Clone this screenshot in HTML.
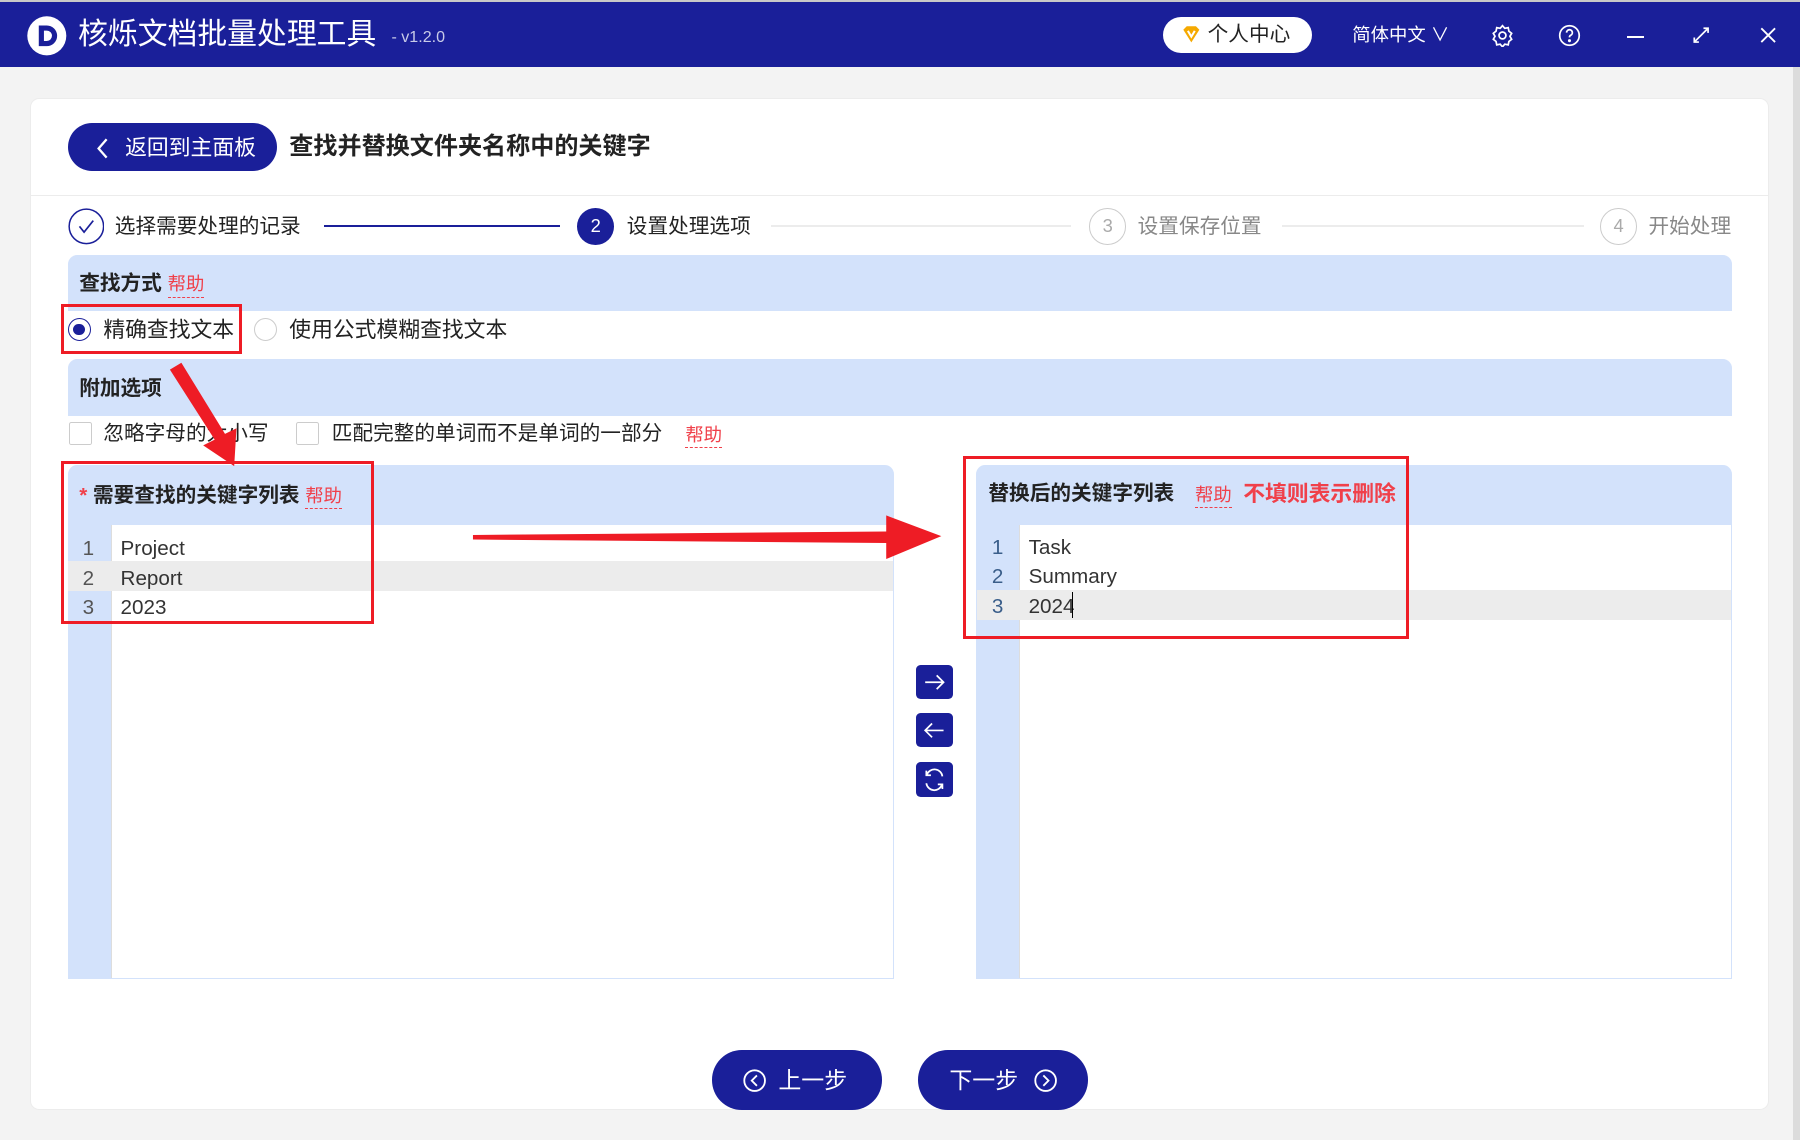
<!DOCTYPE html>
<html><head><meta charset="utf-8"><style>
*{margin:0;padding:0;box-sizing:border-box}
html,body{width:1800px;height:1140px;overflow:hidden;background:#f3f3f3}
#w{position:relative;width:1568px;height:993px;zoom:1.14796;font-family:"Liberation Sans","Noto Sans CJK SC",sans-serif;color:#222}
.a{position:absolute}
.hd{left:0;top:0;width:1568px;height:58px;background:#1a1f99;border-top:2px solid #c8c8c8}
.t{white-space:nowrap;line-height:1}
.card{left:26px;top:85px;width:1515px;height:882px;background:#fff;border-radius:8px;border:1px solid #ececec}
.sec{background:#d3e2fb;border-radius:8px 8px 0 0}
.help{color:#f0404a;border-bottom:1px dashed #f0404a;font-size:16px;padding-bottom:2px;font-weight:normal}
.rb{border:3px solid #ee1c25}
.sb{background:#1a1f99;border-radius:4px;width:32px;height:30px}
.ln{font-size:18px}
</style></head><body><div id="w">
<div class="a hd"></div>
<svg class="a" style="left:22px;top:12px" width="38" height="38" viewBox="0 0 38 38"><circle cx="19" cy="19" r="17" fill="#fff"/><path d="M12 10h7a9 9 0 0 1 0 18h-7z" fill="#1a1f99"/><path d="M16.5 14.5h2.5a4.5 4.5 0 0 1 0 9h-2.5z" fill="#fff"/></svg>
<div class="a t" style="left:68px;top:17px;font-size:26px;color:#fff">核烁文档批量处理工具</div>
<div class="a t" style="left:341px;top:25px;font-size:14px;color:#c8cbe8">- v1.2.0</div>
<div class="a" style="left:1013px;top:15px;width:130px;height:31px;background:#fff;border-radius:16px"></div>
<svg class="a" style="left:1029px;top:21px" width="18" height="18" viewBox="0 0 18 18"><path d="M2 5l3-3h8l3 3-7 11z" fill="#f5a900"/><path d="M6 6l3 5 3-5" stroke="#fff" stroke-width="1.8" fill="none"/></svg>
<div class="a t" style="left:1052px;top:22px;font-size:18px;color:#222">个人中心</div>
<div class="a t" style="left:1178px;top:23px;font-size:16px;color:#fff">简体中文 ∨</div>
<svg class="a" style="left:1299px;top:21px" width="20" height="20" viewBox="0 0 20 20" fill="none" stroke="#fff" stroke-width="1.5"><circle cx="10" cy="10" r="3"/><path d="M10 1.5l2 2.3 3-.6.6 3 2.4 1.9-1.5 2.6 1.5 2.6-2.4 1.9-.6 3-3-.6-2 2.3-2-2.3-3 .6-.6-3L2 13.3l1.5-2.6L2 8.1l2.4-1.9.6-3 3 .6z"/></svg>
<svg class="a" style="left:1357px;top:21px" width="20" height="20" viewBox="0 0 20 20" fill="none" stroke="#fff" stroke-width="1.5"><circle cx="10" cy="10" r="8.5"/><path d="M7.5 7.5a2.5 2.5 0 1 1 3.5 2.3c-.8.4-1 1-1 1.8"/><circle cx="10" cy="14.5" r=".6" fill="#fff"/></svg>
<div class="a" style="left:1417px;top:31px;width:15px;height:2px;background:#fff"></div>
<svg class="a" style="left:1474px;top:23px" width="16" height="16" viewBox="0 0 16 16" stroke="#fff" stroke-width="1.5" fill="none"><path d="M2 14L14 2M10 2h4v4M2 10v4h4"/></svg>
<svg class="a" style="left:1532px;top:23px" width="16" height="16" viewBox="0 0 16 16" stroke="#fff" stroke-width="1.6"><path d="M2 2l12 12M14 2L2 14"/></svg>
<div class="a" style="left:1562px;top:58px;width:6px;height:935px;background:#dcdcdc"></div>

<div class="a card"></div>
<div class="a" style="left:59px;top:107px;width:182px;height:42px;background:#1a1f99;border-radius:21px"></div>
<svg class="a" style="left:82px;top:119px" width="14" height="20" fill="none" stroke="#fff" stroke-width="2"><path d="M11 2L4 10l7 8"/></svg>
<div class="a t" style="left:109px;top:119px;font-size:19px;color:#fff">返回到主面板</div>
<div class="a t" style="left:252px;top:118px;font-size:21px;font-weight:bold;color:#222">查找并替换文件夹名称中的关键字</div>
<div class="a" style="left:27px;top:170px;width:1513px;height:1px;background:#ececec"></div>

<svg class="a" style="left:59px;top:181px" width="32" height="32"><circle cx="16" cy="16" r="15" fill="#fff" stroke="#1a1f99" stroke-width="1.3"/><path d="M10 16l4 5 8-10" stroke="#1a1f99" stroke-width="1.5" fill="none"/></svg>
<div class="a t" style="left:100px;top:189px;font-size:18px">选择需要处理的记录</div>
<div class="a" style="left:282px;top:196px;width:206px;height:2px;background:#1a1f99"></div>
<div class="a" style="left:503px;top:181px;width:32px;height:32px;border-radius:50%;background:#1a1f99;color:#fff;font-size:16px;text-align:center;line-height:32px">2</div>
<div class="a t" style="left:546px;top:189px;font-size:18px">设置处理选项</div>
<div class="a" style="left:672px;top:196px;width:261px;height:2px;background:#ececec"></div>
<div class="a" style="left:949px;top:181px;width:32px;height:32px;border-radius:50%;border:1px solid #ccc;color:#aaa;font-size:16px;text-align:center;line-height:30px">3</div>
<div class="a t" style="left:991px;top:189px;font-size:18px;color:#888">设置保存位置</div>
<div class="a" style="left:1117px;top:196px;width:263px;height:2px;background:#ececec"></div>
<div class="a" style="left:1394px;top:181px;width:32px;height:32px;border-radius:50%;border:1px solid #ccc;color:#aaa;font-size:16px;text-align:center;line-height:30px">4</div>
<div class="a t" style="left:1436px;top:189px;font-size:18px;color:#888">开始处理</div>

<div class="a sec" style="left:59px;top:222px;width:1450px;height:49px"></div>
<div class="a t" style="left:69px;top:239px;font-size:18px;font-weight:bold">查找方式 <span class="help">帮助</span></div>
<div class="a" style="left:59px;top:277px;width:20px;height:20px;border-radius:50%;border:1.5px solid #1a1f99"></div>
<div class="a" style="left:64px;top:282px;width:10px;height:10px;border-radius:50%;background:#1a1f99"></div>
<div class="a t" style="left:90px;top:278px;font-size:19px">精确查找文本</div>
<div class="a" style="left:221px;top:277px;width:20px;height:20px;border-radius:50%;border:1px solid #ccc"></div>
<div class="a t" style="left:252px;top:278px;font-size:19px">使用公式模糊查找文本</div>
<div class="a rb" style="left:53px;top:265px;width:158px;height:43px"></div>

<div class="a sec" style="left:59px;top:313px;width:1450px;height:49px"></div>
<div class="a t" style="left:69px;top:330px;font-size:18px;font-weight:bold">附加选项</div>
<div class="a" style="left:60px;top:368px;width:20px;height:20px;border:1px solid #ccc;border-radius:2px"></div>
<div class="a t" style="left:90px;top:369px;font-size:18px">忽略字母的大小写</div>
<div class="a" style="left:258px;top:368px;width:20px;height:20px;border:1px solid #ccc;border-radius:2px"></div>
<div class="a t" style="left:289px;top:369px;font-size:18px">匹配完整的单词而不是单词的一部分</div>
<div class="a t" style="left:597px;top:371px"><span class="help">帮助</span></div>

<div class="a sec" style="left:59px;top:405px;width:720px;height:448px;border:1px solid #d3e2fb"></div>
<div class="a" style="left:97px;top:457px;width:681px;height:395px;background:#fff;border-left:1px solid #ddd"></div>
<div class="a" style="left:59px;top:489px;width:719px;height:26px;background:#ececec"></div>
<div class="a t" style="left:69px;top:423px;font-size:18px;font-weight:bold"><span style="color:#f0404a">*</span> 需要查找的关键字列表 <span class="help">帮助</span></div>
<div class="a ln" style="left:72px;top:465px;line-height:26px;color:#555">1<br>2<br>3</div>
<div class="a ln" style="left:105px;top:465px;line-height:26px;color:#333">Project<br>Report<br>2023</div>
<div class="a rb" style="left:53px;top:402px;width:273px;height:142px"></div>

<div class="a sec" style="left:850px;top:405px;width:659px;height:448px;border:1px solid #d3e2fb"></div>
<div class="a" style="left:888px;top:457px;width:620px;height:395px;background:#fff;border-left:1px solid #ddd"></div>
<div class="a" style="left:851px;top:514px;width:657px;height:26px;background:#ececec"></div>
<div class="a t" style="left:861px;top:422px;font-size:18px;font-weight:bold">替换后的关键字列表</div>
<div class="a t" style="left:1041px;top:423px"><span class="help">帮助</span></div>
<div class="a t" style="left:1083px;top:421px;font-size:19px;font-weight:bold;color:#f0404a">不填则表示删除</div>
<div class="a ln" style="left:864px;top:464px;line-height:26px;color:#3a5e8a">1<br>2<br>3</div>
<div class="a ln" style="left:896px;top:464px;line-height:26px;color:#333">Task<br>Summary<br>2024</div>
<div class="a" style="left:934px;top:516px;width:1px;height:22px;background:#000"></div>
<div class="a rb" style="left:839px;top:397px;width:388px;height:160px"></div>

<div class="a sb" style="left:798px;top:579px"></div>
<div class="a sb" style="left:798px;top:621px"></div>
<div class="a sb" style="left:798px;top:664px"></div>
<svg class="a" style="left:798px;top:579px" width="32" height="120" fill="none" stroke="#fff" stroke-width="1.5"><path d="M8 15h16M18 9l6 6-6 6"/><path d="M8 57h16M14 51l-6 6 6 6"/><path d="M23 97a7 7 0 0 0-13.5-1.5M9 103a7 7 0 0 0 13.5 1.5M9 92v4h4M23 108v-4h-4"/></svg>

<svg class="a" style="left:0;top:0" width="1568" height="993"><path d="M148 322l10-6 38 62 10-5-2 33-27-18 10-5z" fill="#ee1c25"/><path d="M412 466l360-3v-14l48 18-48 20v-14l-360-3z" fill="#ee1c25"/></svg>

<div class="a" style="left:620px;top:915px;width:148px;height:52px;background:#1a1f99;border-radius:26px"></div>
<svg class="a" style="left:646px;top:930px" width="22" height="22" fill="none" stroke="#fff" stroke-width="1.6"><circle cx="11" cy="11" r="9"/><path d="M13 6.5L8.5 11l4.5 4.5"/></svg>
<div class="a t" style="left:678px;top:931px;font-size:20px;color:#fff">上一步</div>
<div class="a" style="left:800px;top:915px;width:148px;height:52px;background:#1a1f99;border-radius:26px"></div>
<div class="a t" style="left:827px;top:931px;font-size:20px;color:#fff">下一步</div>
<svg class="a" style="left:900px;top:930px" width="22" height="22" fill="none" stroke="#fff" stroke-width="1.6"><circle cx="11" cy="11" r="9"/><path d="M9 6.5l4.5 4.5L9 15.5"/></svg>
</div></body></html>
